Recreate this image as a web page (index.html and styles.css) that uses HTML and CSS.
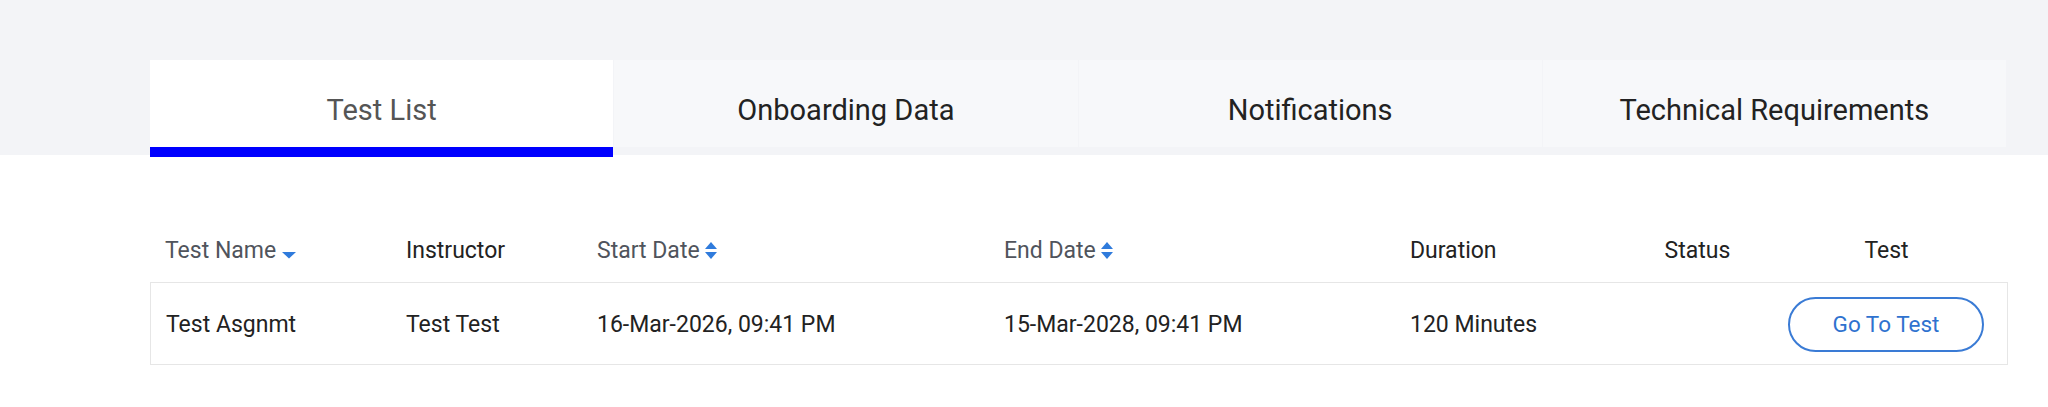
FILE: index.html
```html
<!DOCTYPE html>
<html lang="en">
<head>
  <meta charset="UTF-8" />
  <meta name="viewport" content="width=device-width, initial-scale=1.0"/>
  <title>Test List</title>
  <link rel="stylesheet" href="styles.css">
</head>
<body>

  <div class="tab-band">
    <div class="tabs">
      <div class="tab active">Test List</div>
      <div class="tab">Onboarding Data</div>
      <div class="tab">Notifications</div>
      <div class="tab">Technical Requirements</div>
    </div>
  </div>

  <div class="content">
    <table class="test-table">
      <colgroup>
        <col style="width:241px">
        <col style="width:191px">
        <col style="width:407px">
        <col style="width:406px">
        <col style="width:235px">
        <col style="width:135px">
        <col style="width:243px">
      </colgroup>
      <thead>
        <tr>
          <th class="sortable">Test Name
            <svg class="caret" width="14" height="8" viewBox="0 0 14 8"><polygon points="0,1 14,1 7,7.5" fill="#2f7bdc"/></svg>
          </th>
          <th>Instructor</th>
          <th class="sortable">Start Date
            <svg class="sort" width="12" height="17" viewBox="0 0 12 17"><polygon points="6,0 12,7 0,7" fill="#2f7bdc"/><polygon points="0,10 12,10 6,17" fill="#2f7bdc"/></svg>
          </th>
          <th class="sortable">End Date
            <svg class="sort" width="12" height="17" viewBox="0 0 12 17"><polygon points="6,0 12,7 0,7" fill="#2f7bdc"/><polygon points="0,10 12,10 6,17" fill="#2f7bdc"/></svg>
          </th>
          <th>Duration</th>
          <th class="center">Status</th>
          <th class="center">Test</th>
        </tr>
      </thead>
      <tbody>
        <tr>
          <td>Test Asgnmt</td>
          <td>Test Test</td>
          <td>16-Mar-2026, 09:41 PM</td>
          <td>15-Mar-2028, 09:41 PM</td>
          <td>120 Minutes</td>
          <td class="center"></td>
          <td class="center"><button class="go-btn">Go To Test</button></td>
        </tr>
      </tbody>
    </table>
  </div>

</body>
</html>
```

FILE: styles.css
```css
body {
  font-family: Roboto, 'Liberation Sans', sans-serif;
  background: #ffffff;
  margin: 0;
  color: #222222;
}

.tab-band {
  background: #f3f4f7;
  height: 155px;
  box-sizing: border-box;
  padding: 60px 42px 0 150px;
}

.tabs {
  display: grid;
  grid-template-columns: repeat(4, 1fr);
  gap: 1px;
}

.tab {
  padding: 33px 0 20px;
  line-height: 34px;
  font-size: 29px;
  text-align: center;
  color: #222222;
  background: #f7f8fa;
  background-clip: padding-box;
  border-bottom: 10px solid transparent;
}

.tab.active {
  background: #ffffff;
  background-clip: padding-box;
  color: #555555;
  border-bottom-color: #0000ff;
}

.content {
  padding: 65px 40px 0 150px;
}

.test-table {
  width: 1858px;
  table-layout: fixed;
  border-collapse: separate;
  border-spacing: 0;
  font-size: 23px;
}

.test-table th {
  height: 62px;
  padding: 0 15px;
  text-align: left;
  font-weight: normal;
  line-height: 26px;
  vertical-align: middle;
  color: #222222;
  white-space: nowrap;
}

.test-table th.sortable {
  color: #50545c;
}

.test-table .center {
  text-align: center;
}

.caret {
  vertical-align: -1px;
  margin-left: 0;
}

.sort {
  vertical-align: -1px;
  margin-left: 0;
}

.test-table td {
  height: 80px;
  padding: 1px 15px 0;
  border-top: 1px solid #e6e6e6;
  border-bottom: 1px solid #e6e6e6;
  vertical-align: middle;
  color: #222222;
}

.test-table td:first-child {
  border-left: 1px solid #e6e6e6;
}

.test-table td:last-child {
  border-right: 1px solid #e6e6e6;
}

.go-btn {
  width: 196px;
  height: 55px;
  font-family: inherit;
  font-size: 22.5px;
  color: #2f72cf;
  background: #ffffff;
  border: 2px solid #3a7bd5;
  border-radius: 28px;
  cursor: pointer;
}
```
